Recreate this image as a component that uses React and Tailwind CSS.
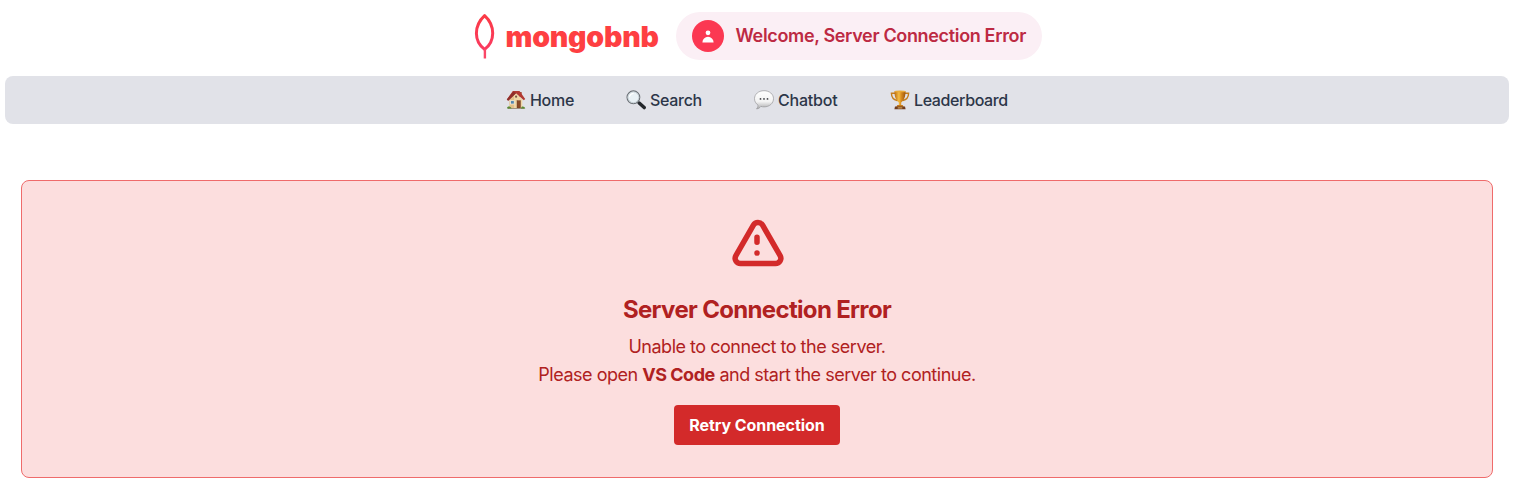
const HouseIcon = () => (
  <svg viewBox="0 0 20 20" className="h-5 w-5 shrink-0">
    <rect x="13.4" y="2" width="2.3" height="5" fill="#a5533d" />
    <path d="M4 9.5 10 3l6.3 6.5V18H3.5z" fill="#efd6a6" />
    <path d="M3.5 9.5 8 5v13H3.5z" fill="#e2c08a" />
    <path d="M6.8.9h6.7L19.2 9l-1.4 1.3L10 3.2 2.2 10.8.8 9.6z" fill="#b23a32" />
    <path d="M10 3.2 2.2 10.8.8 9.6 7.4 1.4z" fill="#8e2f2b" />
    <rect x="4.6" y="10.7" width="3.6" height="3.3" fill="#5285ad" stroke="#fff4df" strokeWidth=".7" />
    <rect x="11" y="10.7" width="3.5" height="7.3" fill="#8a4b28" stroke="#6a361f" strokeWidth=".4" />
    <circle cx="10.1" cy="6.7" r="1.1" fill="#7a5a48" />
    <path d="M2 18h16.5v.9H2z" fill="#9a8b75" />
    <path d="M1 18.5c0-2.6 3.5-2.6 4.6 0zM15 18.5c0-2.8 3.7-2.6 4.3 0z" fill="#5b8b36" />
  </svg>
);

const SearchIcon = () => (
  <svg viewBox="0 0 20 20" className="h-5 w-5 shrink-0">
    <path d="m11.8 11.9 2.2 2" stroke="#777b80" strokeWidth="2" />
    <path d="m13.2 13 5 4.6" stroke="#24272c" strokeWidth="3.4" strokeLinecap="round" />
    <circle cx="7.4" cy="7.3" r="6.4" fill="#e9f1f5" stroke="#6b7075" strokeWidth="1.1" />
    <circle cx="7.4" cy="7.3" r="5.4" fill="none" stroke="#bec8ce" strokeWidth=".8" />
    <path d="M3.5 6.3c.6-1.8 1.9-2.7 3.6-3" stroke="#fff" strokeWidth="1.2" fill="none" strokeLinecap="round" />
  </svg>
);

const ChatIcon = () => (
  <svg viewBox="0 0 20 20" className="h-5 w-5 shrink-0">
    <defs>
      <linearGradient id="bubble" x1="0" y1="0" x2="0" y2="1">
        <stop offset="0" stopColor="#fff" />
        <stop offset=".6" stopColor="#f3f3f3" />
        <stop offset="1" stopColor="#a9a9ab" />
      </linearGradient>
    </defs>
    <path d="M10 .7c5.5 0 9.5 3.5 9.5 8s-4 8.2-9.5 8.2c-1.1 0-2.2-.2-3.1-.5-1.2 1.5-2.5 2.3-4.4 2.500 1-1 1.600-2.400 1.500-3.800C1.900 13.600.5 11.400.5 8.700c0-4.500 4-8 9.500-8z" fill="url(#bubble)" stroke="#98989b" strokeWidth=".7" />
    <circle cx="6.5" cy="8.9" r=".9" fill="#45464a" />
    <circle cx="10" cy="8.9" r=".9" fill="#45464a" />
    <circle cx="13.5" cy="8.9" r=".9" fill="#45464a" />
  </svg>
);

const TrophyIcon = () => (
  <svg viewBox="0 0 20 20" className="h-5 w-5 shrink-0">
    <defs>
      <linearGradient id="cup">
        <stop offset="0" stopColor="#ba6b12" />
        <stop offset=".4" stopColor="#f5bd42" />
        <stop offset=".6" stopColor="#d98e20" />
        <stop offset="1" stopColor="#9c5410" />
      </linearGradient>
    </defs>
    <path d="M5.5 3.2H1.4c.1 4 2 6.5 5.8 7.3M14.5 3.2h4.1c-.1 4-2 6.5-5.8 7.3" fill="none" stroke="#c47d1c" strokeWidth="1.4" />
    <path d="M4.5 1.2h11c0 5.6-1.3 9-4.3 11.2v3.4H8.8v-3.4C5.8 10.2 4.5 6.8 4.5 1.2z" fill="url(#cup)" />
    <ellipse cx="10" cy="1.4" rx="5.5" ry=".9" fill="#e9a936" />
    <path d="M7.3 15h5.4l1 2H6.3z" fill="#c67b1c" />
    <path d="M5 16.6h10l.6 2.7H4.4z" fill="#703d20" />
    <path d="M7.7 17.3h4.6v1.2H7.7z" fill="#d3a256" />
  </svg>
);

const links = [
  { label: "Home", Icon: HouseIcon, style: "w-[68px] tracking-[-0.3px]" },
  { label: "Search", Icon: SearchIcon, style: "w-[76px] tracking-[-0.3px]" },
  { label: "Chatbot", Icon: ChatIcon, style: "w-[84px] tracking-[-0.2px]" },
  { label: "Leaderboard", Icon: TrophyIcon, style: "w-[118px] tracking-[-0.38px]" },
];

export default function App() {
  return (
    <div className="h-[492px] w-full overflow-hidden bg-white pr-[7px] pl-[5px] font-['Inter',sans-serif]">
      <header className="flex h-[76px] items-start justify-center gap-4 pt-3 pl-[1px]">
        <div className="flex h-12 w-[186px] items-center">
          <svg viewBox="0 0 22 48" className="h-12 w-[22px] shrink-0" fill="none">
            <defs>
              <linearGradient id="leaf" x1="0" y1="0" x2="0" y2="1">
                <stop offset="0" stopColor="#fb3b46" />
                <stop offset="1" stopColor="#fa3a60" />
              </linearGradient>
            </defs>
            <path d="M10.6 3.6C5.2 8.6 2.4 14.5 2.4 21.2c0 6.4 2.7 12 8.2 16.2 5.5-4.2 8.1-9.8 8.1-16.2 0-6.7-2.6-12.6-8.1-17.6z" stroke="url(#leaf)" strokeWidth="3" strokeLinejoin="round" />
            <path d="M10.9 37v9.5" stroke="#fa4767" strokeWidth="2.4" />
          </svg>
          <span className="mt-[2px] ml-[10px] text-[28.5px] leading-9 font-black tracking-[-0.2px] whitespace-nowrap text-[#fe3f42]">mongobnb</span>
        </div>
        <div className="flex h-12 w-[366px] items-center gap-3 rounded-full bg-[#fbeff5] px-4">
          <span className="flex h-8 w-8 shrink-0 items-center justify-center rounded-full bg-[#fb3852]">
            <svg viewBox="0 0 20 20" className="h-4 w-4" fill="#fff">
              <path fillRule="evenodd" d="M10 9a3 3 0 100-6 3 3 0 000 6zm-7 9a7 7 0 1114 0H3z" clipRule="evenodd" />
            </svg>
          </span>
          <span className="text-lg leading-7 font-semibold tracking-[-0.34px] whitespace-nowrap text-[#bd2a43]">Welcome, Server Connection Error</span>
        </div>
      </header>
      <nav className="flex h-12 items-center justify-center gap-[52px] rounded-lg bg-[#e1e2e8]">
        {links.map(({ label, Icon, style }) => (
          <a key={label} className={`flex h-6 items-center gap-1 font-medium whitespace-nowrap text-[#2c3648] ${style}`}>
            <Icon />
            <span>{label}</span>
          </a>
        ))}
      </nav>
      <main className="px-4 pt-14">
        <section className="flex h-[298px] flex-col items-center rounded-lg border border-[#ef6b6b] bg-[#fcdede] pt-8 text-center text-[#b02121]">
          <svg viewBox="0 0 64 64" className="h-16 w-16 shrink-0 text-[#d32a2a]" fill="none" stroke="currentColor" strokeWidth="5.5" strokeLinecap="round" strokeLinejoin="round">
            <path d="M15.5 50.6h35c4.1 0 6.7-4.45 4.62-8L37.6 12.2c-2.05-3.55-7.15-3.55-9.2 0L10.88 42.6c-2.08 3.55.52 8 4.62 8z" />
            <path d="M32 24.2v5.1M32 40.1h.01" />
          </svg>
          <h2 className="mt-[17px] text-2xl leading-8 font-bold tracking-[-0.67px] whitespace-nowrap">Server Connection Error</h2>
          <p className="mt-[7px] text-lg leading-7 tracking-[-0.48px] whitespace-nowrap">
            Unable to connect to the server.
            <br />
            Please open <strong className="font-bold">VS Code</strong> and start the server to continue.
          </p>
          <button className="mt-4 h-10 w-[166px] shrink-0 rounded bg-[#d32a2a] text-base font-bold tracking-[-0.07px] whitespace-nowrap text-white">Retry Connection</button>
        </section>
      </main>
    </div>
  );
}
